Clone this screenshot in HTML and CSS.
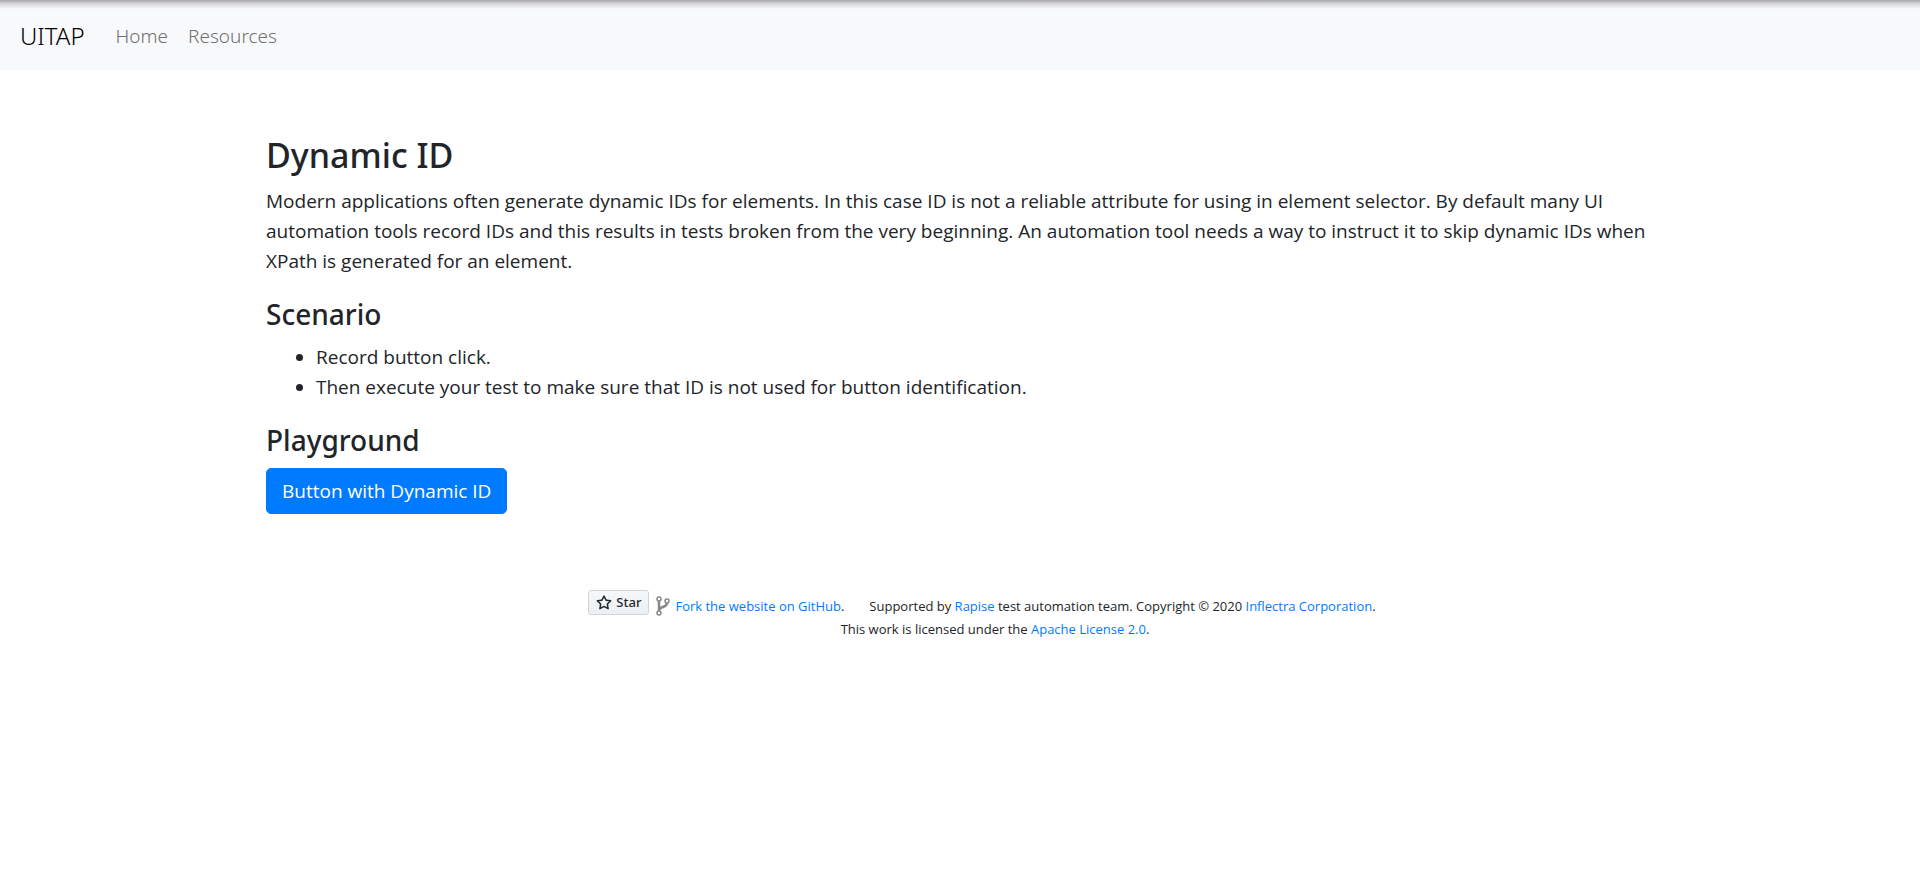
FILE: index.html
```html
<!DOCTYPE html>
<html lang="en">
<head>
<meta charset="utf-8">
<meta name="viewport" content="width=device-width, initial-scale=1">
<title>Dynamic ID</title>
<link rel="stylesheet" href="styles.css">
</head>
<body>
<nav class="navbar">
  <a class="brand" href="#">UITAP</a>
  <a class="nav-link" href="#">Home</a>
  <a class="nav-link" href="#">Resources</a>
</nav>
<main class="container">
  <h1 class="title">Dynamic ID</h1>
  <p class="text">Modern applications often generate dynamic IDs for elements. In this case ID is not a reliable attribute for using in element selector. By default many UI automation tools record IDs and this results in tests broken from the very beginning. An automation tool needs a way to instruct it to skip dynamic IDs when XPath is generated for an element.</p>
  <h2 class="subtitle">Scenario</h2>
  <ul class="list">
    <li>Record button click.</li>
    <li>Then execute your test to make sure that ID is not used for button identification.</li>
  </ul>
  <h2 class="subtitle">Playground</h2>
  <button class="btn" type="button">Button with Dynamic ID</button>
</main>
<footer class="footer">
  <div class="credits">
    <a class="star" href="#"><svg class="star-icon" viewBox="0 0 16 16" aria-hidden="true"><path fill-rule="evenodd" d="M8 .25a.75.75 0 01.673.418l1.882 3.815 4.21.612a.75.75 0 01.416 1.279l-3.046 2.97.719 4.192a.75.75 0 01-1.088.791L8 12.347l-3.766 1.98a.75.75 0 01-1.088-.79l.72-4.194L.818 6.374a.75.75 0 01.416-1.28l4.21-.611L7.327.668A.75.75 0 018 .25zm0 2.445L6.615 5.5a.75.75 0 01-.564.41l-3.097.45 2.24 2.184a.75.75 0 01.216.664l-.528 3.084 2.769-1.456a.75.75 0 01.698 0l2.77 1.456-.53-3.084a.75.75 0 01.216-.664l2.24-2.183-3.096-.45a.75.75 0 01-.564-.41L8 2.694z"/></svg>Star</a>
    <svg class="fork-icon" viewBox="0 0 14 20" aria-hidden="true"><g fill="none" stroke="currentColor"><circle cx="3" cy="3" r="2" stroke-width="1.5"/><circle cx="3" cy="17" r="2" stroke-width="1.5"/><circle cx="11" cy="5" r="2" stroke-width="1.5"/><path stroke-width="2.5" d="M3 5v10M11 7c0 5-7 3-8 7"/></g></svg>
    <span><a class="link" href="#">Fork the website on GitHub</a>.</span>
    <span class="support">Supported by <a class="link" href="#">Rapise</a> test automation team. Copyright © 2020 <a class="link" href="#">Inflectra Corporation</a>.</span>
  </div>
  <div>This work is licensed under the <a class="link" href="#">Apache License 2.0</a>.</div>
</footer>
</body>
</html>
```
FILE: styles.css
```css
* { box-sizing: border-box; }
body {
  margin: 0;
  background: #fff;
  color: #212529;
  font: 400 19px/30px "Open Sans", "Noto Sans", sans-serif;
}
.navbar {
  display: flex;
  align-items: center;
  gap: 20px;
  height: 70px;
  padding: 2px 20px 0;
  background: #f8f9fa linear-gradient(#a8a8ac, #d8d9da 4px, #f8f9fa 9px);
  font-family: "Noto Sans", "Open Sans", sans-serif;
  font-weight: 300;
}
.brand { margin-right: 11px; font-size: 24px; color: #000; text-decoration: none; }
.nav-link { color: #707070; text-decoration: none; }
.container { max-width: 1428px; margin: 0 auto; padding: 64px 20px 0; }
.title, .subtitle {
  margin: 0 0 10px;
  font-family: "Noto Sans", "Open Sans", sans-serif;
  font-weight: 500;
  font-size: 28px;
  line-height: 36px;
}
.title { font-size: 34px; line-height: 42px; }
.text { margin: 0 0 20px; }
.list { margin: 0 0 20px; padding-left: 50px; }
.btn {
  display: block;
  padding: 7px 15px;
  border: 1px solid #007bff;
  border-radius: 5px;
  background: #007bff;
  color: #fff;
  font: inherit;
}
.footer {
  margin-top: 76px;
  padding-left: 70px;
  text-align: center;
  font-size: 13px;
  line-height: 23px;
}
.credits { display: flex; justify-content: center; align-items: flex-end; padding-right: 26px; }
.star {
  display: flex;
  align-items: center;
  gap: 4px;
  height: 25px;
  margin-bottom: 3px;
  padding: 0 7px;
  border: 1px solid #d1d5d9;
  border-radius: 3px;
  background: linear-gradient(#f6f8fa, #ebf0f4);
  color: #24292e;
  font-family: "Noto Sans", "Open Sans", sans-serif;
  font-weight: 500;
  text-decoration: none;
}
.star-icon { width: 16px; height: 16px; fill: currentColor; }
.fork-icon { width: 14px; height: 20px; margin: 0 5px 2px 7px; color: #888; }
.support { margin-left: 25px; }
.link { color: #007bff; text-decoration: none; }
```
